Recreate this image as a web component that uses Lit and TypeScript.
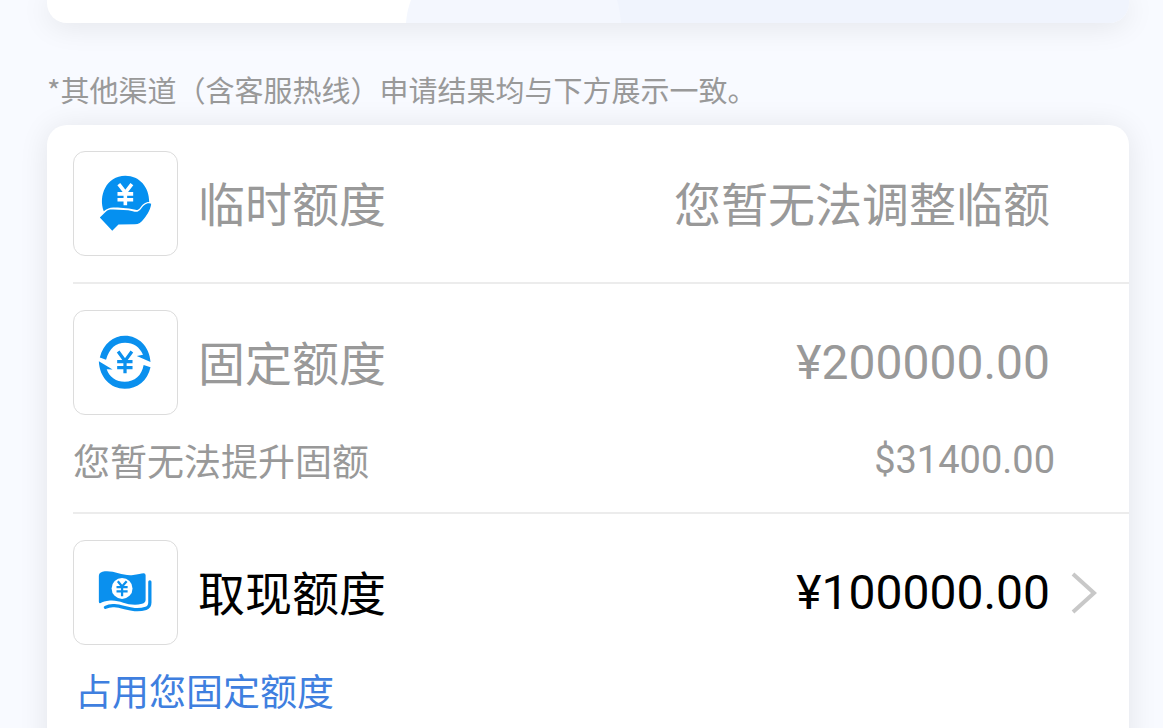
import { LitElement, html, css, svg, nothing } from "lit";
import { customElement, property } from "lit/decorators.js";

type IconName = "hand" | "cycle" | "cash";

interface Quota {
  icon: IconName;
  title: string;
  value: string;
  note?: string;
  noteValue?: string;
  active?: boolean;
}

const QUOTAS: Quota[] = [
  { icon: "hand", title: "临时额度", value: "您暂无法调整临额" },
  {
    icon: "cycle",
    title: "固定额度",
    value: "¥200000.00",
    note: "您暂无法提升固额",
    noteValue: "$31400.00",
  },
  {
    icon: "cash",
    title: "取现额度",
    value: "¥100000.00",
    note: "占用您固定额度",
    active: true,
  },
];

const ICONS = {
  // Coin resting on an open palm
  hand: svg`
    <path fill="#0590f0" d="M131 213 C114 168 138 105 197 105 C241 105 270 140 270 185 C257 185 250 193 242 203 C236 210 232 210 224 208 C205 203 175 203 160 202 C148 202 142 206 131 213 Z"/>
    <path fill="#0590f0" d="M119 232 L138 214 C144 208 151 207 160 208 C180 210 203 208 220 213 C232 217 238 214 244 207 C252 197 258 189 270 189 L276 190 C275 203 266 222 254 236 C245 247 238 253 226 253 L176 254 L157 273 Z"/>
    <path fill="none" stroke="#fff" stroke-width="11" d="M177 130 L197 156 L217 130 M197 153 V195 M173 160 H221 M173 178 H221"/>`,
  // Two arrows circling the currency sign
  cycle: svg`
    <path fill="#0a90ee" d="M119 174 C130 132 160 108 196 108 C237 108 271 140 274 188 L232 170 L251 166 C241 142 222 129 196 129 C169 129 148 145 138 181 Z"/>
    <path fill="#0a90ee" d="M274 204 C265 245 235 270 195 270 C152 270 118 236 116 186 L158 211 L140 210 C149 235 169 248 195 248 C226 248 247 229 253 197 Z"/>
    <path fill="none" stroke="#0a90ee" stroke-width="10" d="M175 156 L196 185 L217 156 M196 182 V222 M172 187 H219 M172 205 H219"/>`,
  // Waving banknote with a second one behind
  cash: svg`
    <path fill="#0a90ee" d="M116 139 Q116 129 127 126 C160 119 186 140 221 136 C235 135 246 132 253 131 Q259 131 259 137 V212 Q259 222 248 224 C207 235 184 211 150 214 C136 215 128 219 120 222 Q116 223 116 218 Z"/>
    <circle cx="187" cy="177" r="32" fill="#fff"/>
    <path fill="none" stroke="#0a90ee" stroke-width="7" d="M174 155 L187 171 L201 155 M187 170 V201 M170 173 H204 M170 186 H204"/>
    <path fill="none" stroke="#0a90ee" stroke-width="10" stroke-linecap="round" d="M272 157 V220 Q272 234 260 238 C222 250 195 232 164 230 C151 229 144 231 136 235"/>`,
};

@customElement("quota-row")
class QuotaRow extends LitElement {
  @property({ attribute: false }) quota!: Quota;

  static styles = css`
    :host {
      display: block;
      margin-left: 26px;
      color: #999;
    }
    :host(:not(:first-child)) {
      border-top: 2px solid #ececec;
    }
    .row {
      display: block;
      padding: 26px 0;
      color: inherit;
      text-decoration: none;
    }
    .main {
      display: grid;
      grid-template-columns: 105px 1fr auto 79px;
      align-items: center;
    }
    .tile {
      box-sizing: border-box;
      width: 105px;
      height: 105px;
      border: 1px solid #dcdcdc;
      border-radius: 12px;
      overflow: hidden;
    }
    .tile svg {
      display: block;
      width: 100%;
      height: 100%;
    }
    .title,
    .value {
      padding-bottom: 4px;
      font-size: 47px;
      line-height: 70px;
      white-space: nowrap;
    }
    .title {
      padding-left: 20px;
    }
    .money {
      padding-bottom: 0;
      font-family: Roboto, "Noto Sans CJK SC", sans-serif;
      font-size: 48px;
    }
    .row.active {
      color: #000;
    }
    .arrow {
      display: block;
      width: 26px;
      height: 44px;
      margin-left: 21px;
    }
    .sub {
      display: flex;
      justify-content: space-between;
      margin-top: 21px;
      padding: 0 74px 2px 0;
      font-size: 37px;
      line-height: 48px;
    }
    .active .sub {
      padding-left: 2px;
      color: #3f7fdf;
    }
    .sub .money {
      font-size: 38px;
    }
  `;

  render() {
    const q = this.quota;
    const money = /^[¥$]/.test(q.value) ? "money" : "";
    const body = html`
      <div class="main">
        <div class="tile">
          <svg viewBox="40 32 315 315" aria-hidden="true">${ICONS[q.icon]}</svg>
        </div>
        <span class="title">${q.title}</span>
        <span class="value ${money}">${q.value}</span>
        ${q.active
          ? html`<svg class="arrow" viewBox="0 0 26 44" aria-hidden="true">
              <path d="M2 3 L23 22 L2 41" fill="none" stroke="#c8c8c8" stroke-width="4" />
            </svg>`
          : nothing}
      </div>
      ${q.note
        ? html`<div class="sub">
            <span>${q.note}</span>
            ${q.noteValue ? html`<span class="money">${q.noteValue}</span>` : nothing}
          </div>`
        : nothing}
    `;
    return q.active
      ? html`<a class="row active" href="#cash">${body}</a>`
      : html`<div class="row">${body}</div>`;
  }
}

@customElement("app-root")
class AppRoot extends LitElement {
  static styles = css`
    :host {
      display: block;
      box-sizing: border-box;
      height: 100vh;
      overflow: hidden;
      padding: 0 34px 0 47px;
      background: #f8faff;
      font-family: "Noto Sans CJK SC", sans-serif;
    }
    .banner {
      overflow: hidden;
      border-radius: 0 0 20px 20px;
      background: #fff;
      box-shadow: 0 2px 30px rgba(0, 0, 0, 0.1);
    }
    .banner svg {
      display: block;
      width: 100%;
      height: 23px;
    }
    .hint {
      margin: 0;
      padding: 44px 0 14px;
      color: #999;
      font-size: 29px;
      line-height: 44px;
    }
    .card {
      padding-bottom: 20px;
      border-radius: 20px;
      background: #fff;
      box-shadow: 0 2px 30px rgba(0, 0, 0, 0.09);
    }
  `;

  render() {
    return html`
      <div class="banner">
        <svg viewBox="0 0 1082 23" preserveAspectRatio="none" aria-hidden="true">
          <path d="M364 0 H1082 V23 H359 Q360 10 364 0 Z" fill="#f4f7fe" />
          <path d="M570 0 H1082 V23 H574 Q573 10 570 0 Z" fill="#f0f4fd" />
        </svg>
      </div>
      <p class="hint">*其他渠道（含客服热线）申请结果均与下方展示一致。</p>
      <main class="card">
        ${QUOTAS.map((q) => html`<quota-row .quota=${q}></quota-row>`)}
      </main>
    `;
  }
}
